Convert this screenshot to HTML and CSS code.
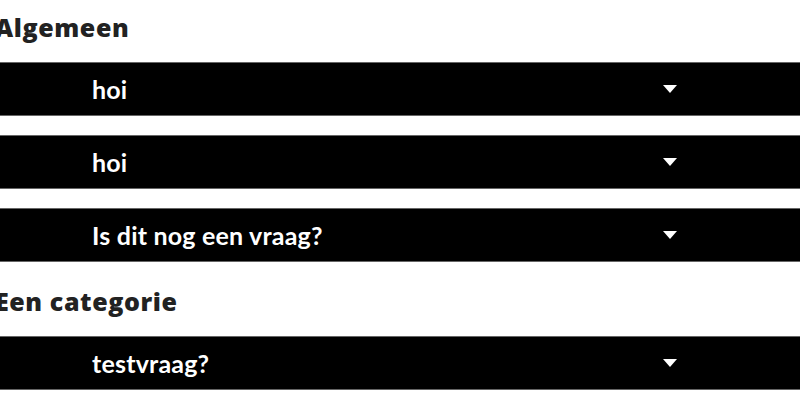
FILE: index.html
```html
<!DOCTYPE html>
<html>
<head>
<meta charset="utf-8">
<link rel="stylesheet" href="styles.css">
</head>
<body>
<div class="faq">
  <h2 class="cat">Algemeen</h2>
  <div class="q"><span class="q-text">hoi</span><span class="arrow"></span></div>
  <div class="q"><span class="q-text">hoi</span><span class="arrow"></span></div>
  <div class="q"><span class="q-text">Is dit nog een vraag?</span><span class="arrow"></span></div>
  <h2 class="cat">Een categorie</h2>
  <div class="q"><span class="q-text">testvraag?</span><span class="arrow"></span></div>
</div>
</body>
</html>
```
FILE: styles.css
```css
html, body {
  margin: 0;
  padding: 0;
  background: #fff;
  overflow: hidden;
}
.faq {
  display: flex;
  flex-direction: column;
}
.cat {
  margin: 0 0 12px -5px;
  height: 43px;
  font-family: "Open Sans", sans-serif;
  font-weight: 800;
  font-size: 25px;
  line-height: 40px;
  color: #222;
  letter-spacing: 0.6px;
}
.cat:first-child { margin-top: 7px; }
.q {
  display: flex;
  align-items: center;
  height: 52px;
  background: #000;
  border-top: 1px solid #666;
  border-bottom: 1px solid #666;
  padding: 0 0 0 92px;
  margin-bottom: 19px;
}
.q-text {
  flex: 1;
  font-family: "Lato", sans-serif;
  font-weight: 700;
  font-size: 25px;
  letter-spacing: 0.2px;
  color: #fff;
}
.arrow {
  width: 0;
  height: 0;
  border-left: 7px solid transparent;
  border-right: 7px solid transparent;
  border-top: 8px solid #fff;
  margin-right: 123px;
}
```
